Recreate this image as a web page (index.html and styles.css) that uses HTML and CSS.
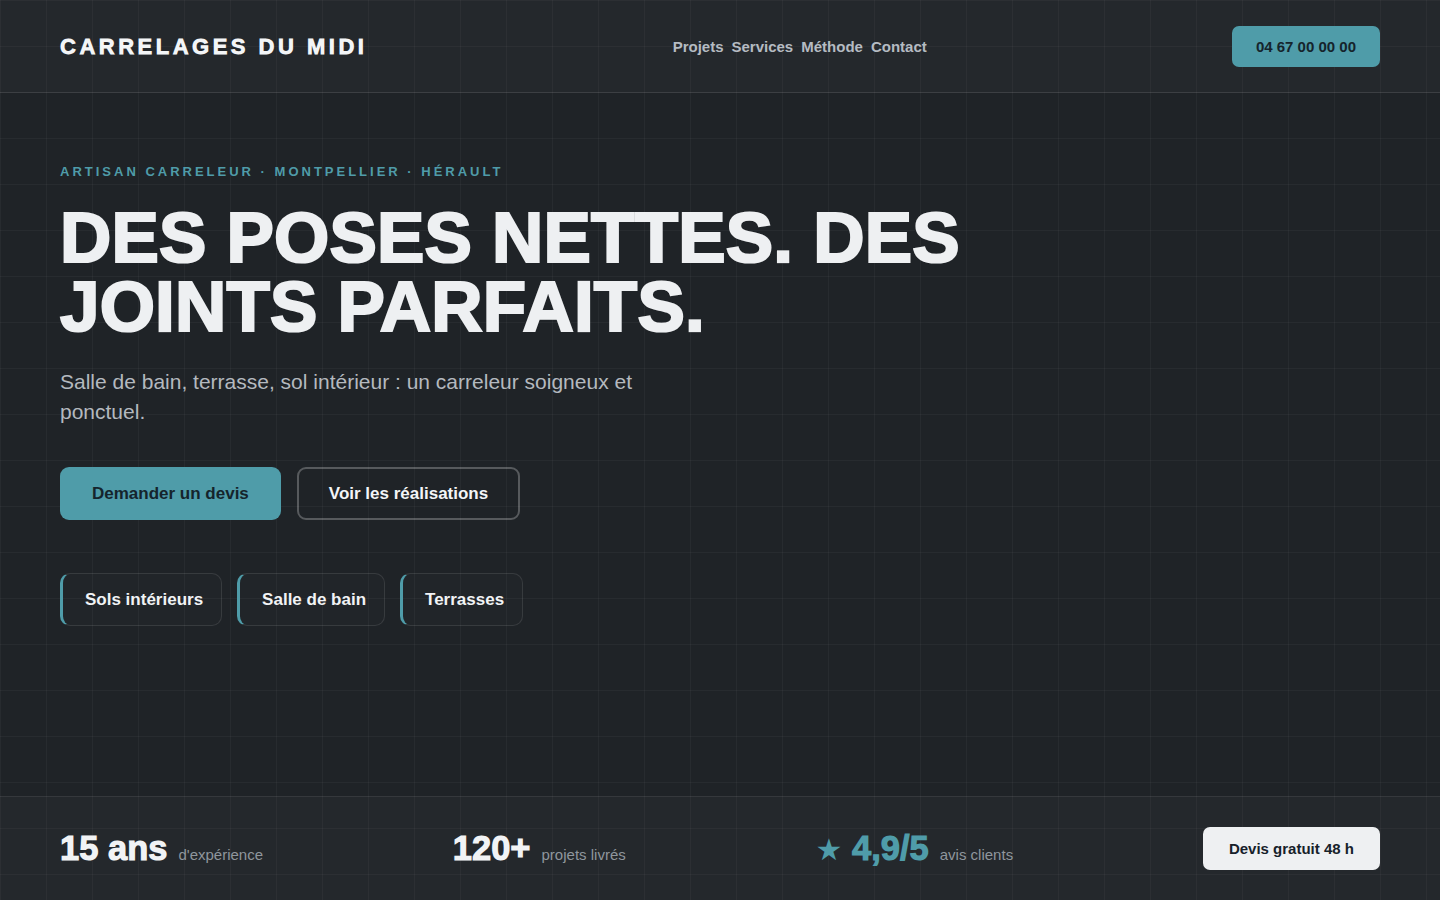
FILE: index.html
```html
<!DOCTYPE html>
<html lang="fr">
<head>
<meta charset="utf-8">
<title>Carrelages du Midi</title>
<link rel="stylesheet" href="styles.css">
</head>
<body>
<div class="page">
  <header class="header">
    <div class="logo">CARRELAGES DU MIDI</div>
    <nav class="nav">
      <a href="#">Projets</a>
      <a href="#">Services</a>
      <a href="#">Méthode</a>
      <a href="#">Contact</a>
    </nav>
    <a class="phone" href="#">04 67 00 00 00</a>
  </header>

  <main class="hero">
    <p class="eyebrow">ARTISAN CARRELEUR · MONTPELLIER · HÉRAULT</p>
    <h1 class="title">DES POSES NETTES. DES<br>JOINTS PARFAITS.</h1>
    <p class="lead">Salle de bain, terrasse, sol intérieur : un carreleur soigneux et ponctuel.</p>
    <div class="actions">
      <a class="btn btn-primary" href="#">Demander un devis</a>
      <a class="btn btn-ghost" href="#">Voir les réalisations</a>
    </div>
    <div class="chips">
      <span class="chip">Sols intérieurs</span>
      <span class="chip">Salle de bain</span>
      <span class="chip">Terrasses</span>
    </div>
  </main>

  <footer class="stats">
    <div class="stat"><span class="num">15 ans</span><span class="label">d'expérience</span></div>
    <div class="stat"><span class="num">120+</span><span class="label">projets livrés</span></div>
    <div class="stat"><span class="num accent"><span class="star">★</span> 4,9/5</span><span class="label">avis clients</span></div>
    <a class="quote" href="#">Devis gratuit 48 h</a>
  </footer>
</div>
</body>
</html>
```

FILE: styles.css
```css
* { box-sizing: border-box; }

html, body { margin: 0; padding: 0; }

body {
  font-family: "Liberation Sans", Arial, sans-serif;
  background-color: #1f2327;
  background-image:
    linear-gradient(rgba(255,255,255,0.035) 1px, transparent 1px),
    linear-gradient(90deg, rgba(255,255,255,0.035) 1px, transparent 1px);
  background-size: 46px 46px;
  color: #eef0f2;
}

a { text-decoration: none; color: inherit; }

.page {
  min-height: 100vh;
  display: flex;
  flex-direction: column;
}

.header {
  display: flex;
  justify-content: space-between;
  align-items: center;
  padding: 26px 60px 25px;
  background: rgba(255,255,255,0.025);
  border-bottom: 1px solid rgba(255,255,255,0.08);
}

.logo {
  font-size: 22px;
  font-weight: 1000;
  letter-spacing: 3.5px;
  color: #f3f5f7;
  line-height: 1;
}

.nav {
  display: flex;
  gap: 8px;
}

.nav a {
  font-size: 15px;
  font-weight: 700;
  color: #b5bbc2;
}

.phone {
  display: block;
  background: #4f9ca9;
  color: #15242c;
  font-size: 15px;
  font-weight: 700;
  line-height: 17px;
  padding: 12px 24px;
  border-radius: 7px;
}

.hero {
  flex: 1;
  padding: 71px 60px 0;
}

.eyebrow {
  margin: 0;
  font-size: 13px;
  font-weight: 700;
  letter-spacing: 3px;
  color: #4f9ca9;
}

.title {
  margin: 24px 0 0;
  font-family: "Liberation Sans", Arial, sans-serif;
  font-size: 71px;
  line-height: 69px;
  font-weight: 1000;
  letter-spacing: 0.2px;
  color: #eef0f2;
}

.lead {
  margin: 26px 0 0;
  max-width: 620px;
  font-size: 21px;
  line-height: 30px;
  color: #b4b9bf;
}

.actions {
  display: flex;
  gap: 16px;
  margin-top: 40px;
}

.btn {
  display: block;
  font-size: 17px;
  font-weight: 700;
  line-height: 21px;
  border-radius: 9px;
}

.btn-primary {
  background: #4f9ca9;
  color: #15242c;
  padding: 16px 32px;
}

.btn-ghost {
  border: 2px solid rgba(255,255,255,0.25);
  color: #f3f5f7;
  padding: 14px 30px;
}

.chips {
  display: flex;
  gap: 15px;
  margin-top: 53px;
}

.chip {
  display: block;
  font-size: 17px;
  font-weight: 700;
  line-height: 21px;
  color: #f1f3f5;
  padding: 15px 18px 15px 22px;
  border: 1px solid rgba(255,255,255,0.1);
  border-left: 3px solid #4f9ca9;
  border-radius: 10px;
  background: rgba(255,255,255,0.01);
}

.stats {
  display: flex;
  justify-content: space-between;
  align-items: center;
  padding: 30px 60px;
  background: rgba(255,255,255,0.025);
  border-top: 1px solid rgba(255,255,255,0.08);
}

.stat {
  display: flex;
  align-items: baseline;
  gap: 11px;
}

.num {
  font-size: 34.5px;
  font-weight: 1000;
  color: #f1f3f5;
}

.num.accent { color: #4f9ca9; }

.star {
  font-family: "DejaVu Sans", sans-serif;
  font-weight: 400;
  font-size: 30px;
}

.label {
  font-size: 15px;
  color: #8f969d;
}

.quote {
  display: block;
  background: #eef0f2;
  color: #16212a;
  font-size: 15px;
  font-weight: 700;
  line-height: 19px;
  padding: 12px 26px;
  border-radius: 7px;
}
```
